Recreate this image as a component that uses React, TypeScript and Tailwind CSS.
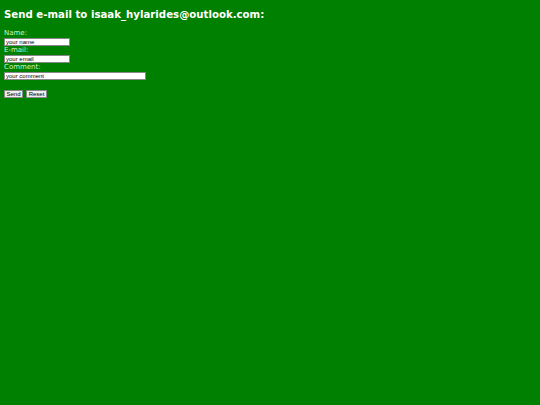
const field =
  "h-[8px] border border-[#888] bg-white px-[1px] font-['Liberation_Sans',sans-serif] text-[6px] leading-[6px] text-black"
const btn =
  "h-[8px] border border-[#888] bg-[#efefef] font-['Liberation_Sans',sans-serif] text-[6px] leading-[6px] text-black"

export default function App() {
  return (
    <div className="min-h-[405px] bg-[#008000] px-[4px] pt-[7px] font-['DejaVu_Sans',sans-serif]">
      <h1 className="text-[10.2px] font-bold leading-[15px] text-white">
        Send e-mail to isaak_hylarides@outlook.com:
      </h1>
      <form className="mt-[7px] flex flex-col items-start text-[7px] leading-[9px] text-[#c8f5c8]">
        <label>Name:</label>
        <input defaultValue="your name" className={`${field} w-[66px]`} />
        <label>E-mail:</label>
        <input defaultValue="your email" className={`${field} w-[66px]`} />
        <label>Comment:</label>
        <input defaultValue="your comment" className={`${field} w-[142px]`} />
        <div className="mt-[10px] flex gap-[3px]">
          <button type="button" className={`${btn} w-[19px]`}>
            Send
          </button>
          <button type="button" className={`${btn} w-[21px]`}>
            Reset
          </button>
        </div>
      </form>
    </div>
  )
}
